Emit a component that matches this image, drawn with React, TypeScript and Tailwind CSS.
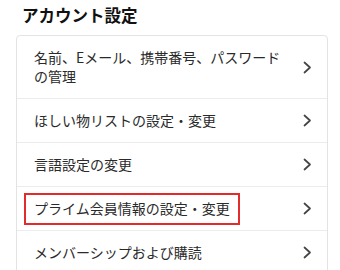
import React from "react";

const Chevron = () => (
  <svg width="9" height="13" viewBox="0 0 9 13" className="shrink-0">
    <polyline points="1.5,1.5 7,6.5 1.5,11.5" fill="none" stroke="#444" strokeWidth="1.7" strokeLinecap="round" strokeLinejoin="round" />
  </svg>
);

const items = [
  { label: "名前、Eメール、携帯番号、パスワードの管理" },
  { label: "ほしい物リストの設定・変更" },
  { label: "言語設定の変更" },
  { label: "プライム会員情報の設定・変更", boxed: true },
  { label: "メンバーシップおよび購読" },
];

export default function App() {
  return (
    <div
      className="w-[340px] h-[270px] overflow-hidden bg-white"
      style={{ fontFamily: '"Noto Sans CJK JP", "Noto Sans", sans-serif' }}
    >
      <div className="pl-[22px] pt-[3px] text-[16.5px] leading-[24px] font-bold text-[#111]">
        アカウント設定
      </div>
      <div className="mt-2 ml-4 mr-[12px] border border-[#e3e3e6] rounded-[4px]">
        {items.map((it, i) => (
          <div
            key={i}
            className={`flex items-center gap-4 pl-[17px] pr-[15px] py-3 ${i > 0 ? "border-t border-[#ececef]" : ""}`}
          >
            <div className="flex-1 text-[14px] leading-[19px] text-[#2a2a2a]">
              {it.boxed ? (
                <span className="inline-block border-2 border-[#e32b2b] px-2 py-[4.5px] -ml-[10px] -my-[6.5px]">
                  {it.label}
                </span>
              ) : (
                it.label
              )}
            </div>
            <Chevron />
          </div>
        ))}
      </div>
    </div>
  );
}
